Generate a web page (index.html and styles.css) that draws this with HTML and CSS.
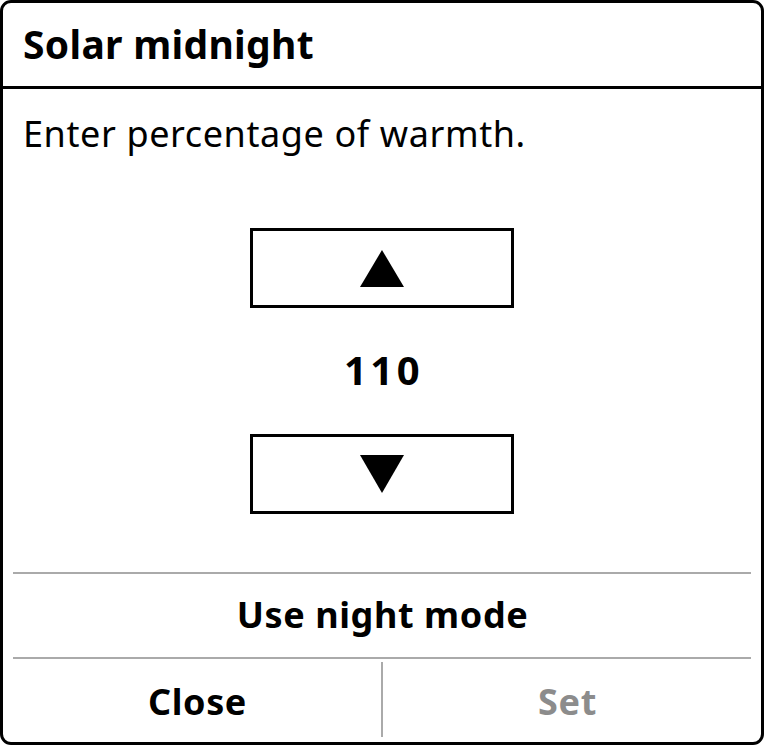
FILE: index.html
```html
<!DOCTYPE html>
<html>
<head>
<meta charset="utf-8">
<link rel="stylesheet" href="styles.css">
</head>
<body>
<div class="dialog">
  <div class="title">Solar midnight</div>
  <div class="title-rule"></div>
  <div class="content">
    <div class="message">Enter percentage of warmth.</div>
    <div class="stepper">
      <div class="step-btn">
        <svg class="tri" width="44" height="37" viewBox="0 0 44 37"><polygon points="22,0 44,37 0,37" fill="#000"/></svg>
      </div>
      <div class="value">110</div>
      <div class="step-btn">
        <svg class="tri" width="44" height="38" viewBox="0 0 44 38"><polygon points="0,0 44,0 22,38" fill="#000"/></svg>
      </div>
    </div>
  </div>
  <div class="rule"></div>
  <div class="toggle">Use night mode</div>
  <div class="rule"></div>
  <div class="actions">
    <div class="action">Close</div>
    <div class="vsep"></div>
    <div class="action disabled">Set</div>
  </div>
</div>
</body>
</html>
```

FILE: styles.css
```css
html, body {
  margin: 0;
  padding: 0;
  background: #fff;
}
body {
  font-family: "Noto Sans", "DejaVu Sans", sans-serif;
  color: #000;
}
.dialog {
  width: 764px;
  height: 745px;
  box-sizing: border-box;
  border: 3px solid #000;
  border-radius: 11px;
  display: flex;
  flex-direction: column;
  overflow: hidden;
}
.title {
  height: 83px;
  box-sizing: border-box;
  line-height: 81px;
  padding: 0 20px 2px;
  font-size: 39px;
  letter-spacing: 0.3px;
  font-weight: 700;
  flex: none;
}
.title-rule {
  height: 3px;
  background: #000;
  flex: none;
}
.content {
  flex: 1;
  padding: 25px 20px 0;
  display: flex;
  flex-direction: column;
}
.message {
  font-size: 36px;
  letter-spacing: 0.6px;
  line-height: 40px;
}
.stepper {
  margin-top: 74px;
  display: flex;
  flex-direction: column;
  align-items: center;
}
.step-btn {
  width: 264px;
  height: 80px;
  box-sizing: border-box;
  border: 3px solid #000;
  display: flex;
  align-items: center;
  justify-content: center;
}
.value {
  height: 126px;
  line-height: 124px;
  font-size: 40px;
  letter-spacing: 3.5px;
  padding-left: 3px;
  font-weight: 700;
}
.rule {
  height: 2px;
  background: #aaaaaa;
  margin: 0 10px;
  flex: none;
}
.toggle {
  height: 83px;
  box-sizing: border-box;
  line-height: 82px;
  padding: 0 0 1px 1px;
  text-align: center;
  font-size: 36px;
  letter-spacing: 0.6px;
  font-weight: 700;
  flex: none;
}
.actions {
  height: 83px;
  margin: 0 10px;
  display: flex;
  flex: none;
}
.action {
  flex: 1;
  text-align: center;
  font-size: 36px;
  letter-spacing: 0.6px;
  font-weight: 700;
  line-height: 81px;
  padding: 2px 0 0 1px;
}
.action.disabled {
  color: #8c8c8c;
}
.vsep {
  width: 2px;
  background: #aaaaaa;
  margin: 3px 0 5px;
}
```
